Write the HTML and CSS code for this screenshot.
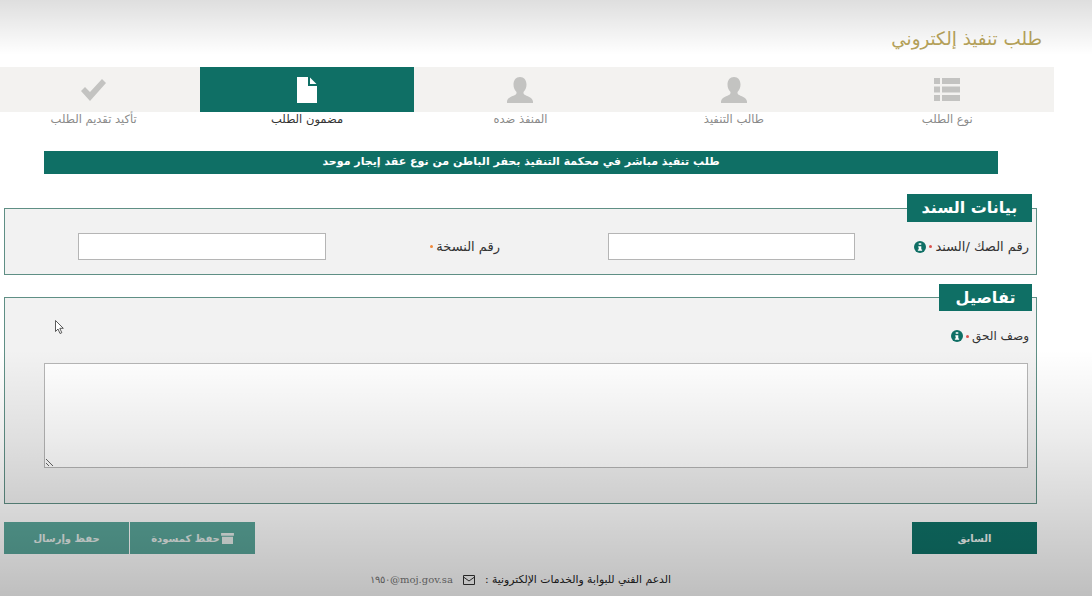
FILE: index.html
```html
<!DOCTYPE html>
<html lang="ar" dir="rtl">
<head>
    <meta charset="UTF-8">
    <meta name="viewport" content="width=device-width, initial-scale=1.0">
    <title>طلب تنفيذ إلكتروني</title>
    <link rel="stylesheet" href="styles.css">
</head>
<body>
    <header class="page-header">
        <h1 class="page-title">طلب تنفيذ إلكتروني</h1>
    </header>

    <div class="steps">
        <div class="step">
            <div class="step-head">
                <svg class="step-icon list-icon" viewBox="0 0 26 24"><path d="M0 0h6v6H0zM8 0h18v6H8zM0 8.500h6v6H0zM8 8.500h18v6H8zM0 17h6v6H0zM8 17h18v6H8z"/></svg>
            </div>
            <div class="step-label">نوع الطلب</div>
        </div>
        <div class="step">
            <div class="step-head">
                <svg class="step-icon user-icon" viewBox="0 0 26 26"><path d="M13 0c-4 0-6.500 3-6.500 7.500 0 3 1 5.500 2.800 7.300 0.400 0.500 0.300 2-0.500 2.600C6.500 19 0.500 20 0 24.500V26h26v-1.500c-0.500-4.500-6.500-5.500-8.800-7.100-0.800-0.600-0.900-2.100-0.500-2.600 1.800-1.800 2.800-4.300 2.800-7.300C19.500 3 17 0 13 0z"/></svg>
            </div>
            <div class="step-label">طالب التنفيذ</div>
        </div>
        <div class="step">
            <div class="step-head">
                <svg class="step-icon user-icon" viewBox="0 0 26 26"><path d="M13 0c-4 0-6.500 3-6.500 7.500 0 3 1 5.500 2.800 7.300 0.400 0.500 0.300 2-0.500 2.600C6.500 19 0.500 20 0 24.500V26h26v-1.500c-0.500-4.500-6.500-5.500-8.800-7.100-0.800-0.600-0.900-2.100-0.500-2.600 1.800-1.800 2.800-4.300 2.800-7.300C19.500 3 17 0 13 0z"/></svg>
            </div>
            <div class="step-label">المنفذ ضده</div>
        </div>
        <div class="step active">
            <div class="step-head">
                <svg class="step-icon file-icon" viewBox="0 0 20 26"><path d="M0 0h11v9h9v17H0zM13 0.500l6.500 6.500H13z"/></svg>
            </div>
            <div class="step-label">مضمون الطلب</div>
        </div>
        <div class="step">
            <div class="step-head">
                <svg class="step-icon check-icon" viewBox="0 0 25 22"><path d="M0 12l4-4 5 5L21 0l4 4L9 22z"/></svg>
            </div>
            <div class="step-label">تأكيد تقديم الطلب</div>
        </div>
    </div>

    <div class="banner">طلب تنفيذ مباشر في محكمة التنفيذ بحفر الباطن من نوع عقد إيجار موحد</div>

    <main class="content">
        <section class="panel">
            <h2 class="legend legend-doc">بيانات السند</h2>
            <div class="field-row">
                <label class="field-label">
                    رقم الصك /السند
                    <span class="req"></span>
                    <svg class="info-icon" viewBox="0 0 14 14"><circle cx="7" cy="7" r="7"/><path class="info-i" d="M5.500 2.500h3v2h-3zM5 6h3.500v4h1v1.500h-5V10h1V7.500H5z"/></svg>
                </label>
                <input class="text-input" type="text">
                <label class="field-label second">
                    رقم النسخة
                    <span class="req orange"></span>
                </label>
                <input class="text-input" type="text">
            </div>
        </section>

        <section class="panel details">
            <h2 class="legend legend-details">تفاصيل</h2>
            <label class="field-label details-label">
                وصف الحق
                <span class="req"></span>
                <svg class="info-icon" viewBox="0 0 14 14"><circle cx="7" cy="7" r="7"/><path class="info-i" d="M5.500 2.500h3v2h-3zM5 6h3.500v4h1v1.500h-5V10h1V7.500H5z"/></svg>
            </label>
            <textarea class="text-area"></textarea>
        </section>

        <div class="actions">
            <button class="btn">السابق</button>
            <div class="btn-group">
                <button class="btn light">
                    <svg class="archive-icon" viewBox="0 0 14 12"><path d="M0 0h14v3H0zM1 4h12v8H1z"/></svg>حفظ كمسودة
                </button>
                <button class="btn light">حفظ وإرسال</button>
            </div>
        </div>

        <footer class="support">
            <span class="support-text">الدعم الفني للبوابة والخدمات الإلكترونية :</span>
            <svg class="mail-icon" viewBox="0 0 12 10"><path d="M0.500 0.500h11v9h-11zM0.500 2l5.500 4 5.500-4"/></svg>
            <span class="support-mail" dir="ltr">١٩٥٠@moj.gov.sa</span>
        </footer>
    </main>

    <svg class="cursor" viewBox="0 0 10 14"><path d="M0.500 0.500v11l2.500-2.500 2 4.500 1.800-0.800-2-4.400h3.500z"/></svg>
</body>
</html>
```

FILE: styles.css
```css
html, body {
    margin: 0;
    height: 596px;
    overflow: hidden;
}
body {
    position: relative;
    background: #fff;
    font-family: "DejaVu Sans", sans-serif;
    color: #333;
}
/* video style shading over the whole page */
body::after {
    content: "";
    position: absolute;
    top: 0;
    left: 0;
    right: 0;
    bottom: 0;
    pointer-events: none;
    background: linear-gradient(to bottom,
        rgba(0, 0, 0, 0.13) 0,
        rgba(0, 0, 0, 0) 55px,
        rgba(0, 0, 0, 0) 350px,
        rgba(0, 0, 0, 0.08) 440px,
        rgba(0, 0, 0, 0.25) 100%);
}
.page-header {
    height: 67px;
    padding: 27px 50px 0 0;
    box-sizing: border-box;
}
.page-title {
    margin: 0;
    font-size: 18.300px;
    line-height: 24px;
    font-weight: normal;
    color: #b8a45a;
}
.steps {
    display: flex;
    width: 1067px;
    margin-right: 38px;
}
.step {
    flex: 1;
    text-align: center;
}
.step-head {
    display: flex;
    align-items: center;
    justify-content: center;
    height: 45px;
    background: #f3f2f0;
}
.step.active .step-head {
    background: #0f6f65;
}
.step-icon {
    display: block;
    fill: #c3c3c1;
}
.step.active .step-icon {
    fill: #fff;
}
.list-icon {
    width: 26px;
    height: 24px;
}
.user-icon {
    width: 26px;
    height: 26px;
}
.file-icon {
    width: 20px;
    height: 26px;
}
.check-icon {
    width: 25px;
    height: 22px;
}
.step-label {
    font-size: 11.500px;
    line-height: 14px;
    color: #8a8a8a;
}
.step.active .step-label {
    color: #333;
}
.banner {
    height: 23px;
    margin: 25px 94px 0 44px;
    background: #0f6f65;
    color: #fff;
    font-size: 11px;
    font-weight: bold;
    line-height: 22px;
    text-align: center;
}
.content {
    margin: 34px 55px 0 4px;
}
.panel {
    display: flex;
    flex-direction: column;
    border: 1px solid #5f8f85;
    background: #f2f2f2;
    padding: 0 7px 14px 0;
}
.legend {
    align-self: flex-start;
    box-sizing: border-box;
    margin: -15px -3px 0 0;
    background: #0f6f65;
    color: #fff;
    font-size: 16px;
    font-weight: bold;
    text-align: center;
}
.legend-doc {
    width: 125px;
    height: 28px;
    line-height: 28px;
}
.legend-details {
    width: 93px;
    height: 27px;
    margin-top: -14px;
    line-height: 27px;
}
.field-row {
    display: grid;
    grid-template-columns: 174px 247px 282px 248px;
    align-items: center;
    margin-top: 11px;
}
.field-label {
    display: flex;
    align-items: center;
    gap: 3px;
    font-size: 13px;
    line-height: 14px;
    color: #333;
}
.field-label.second {
    padding-right: 108px;
}
.req {
    width: 3px;
    height: 3px;
    border-radius: 50%;
    background: #d9534f;
}
.req.orange {
    background: #f0883a;
}
.info-icon {
    width: 12px;
    height: 12px;
    fill: #0f6f65;
}
.info-i {
    fill: #fff;
}
.text-input {
    box-sizing: border-box;
    width: 100%;
    height: 27px;
    margin: 0;
    border: 1px solid #b5b5b5;
    background: #fff;
}
.details {
    margin-top: 22px;
    padding-bottom: 35px;
}
.details-label {
    margin-top: 18px;
    font-size: 12px;
}
.text-area {
    display: block;
    box-sizing: border-box;
    width: 984px;
    height: 105px;
    margin: 20px 1px 0 0;
    border: 1px solid #b5b5b5;
    background: #fff;
}
.actions {
    display: flex;
    justify-content: space-between;
    margin-top: 18px;
}
.btn-group {
    display: flex;
    gap: 1px;
}
.btn {
    display: flex;
    align-items: center;
    justify-content: center;
    gap: 1px;
    width: 125px;
    height: 32px;
    padding: 0;
    border: 0;
    background: #0f7268;
    color: #eef4f2;
    font-family: "DejaVu Sans", sans-serif;
    font-size: 10px;
    font-weight: bold;
}
.btn.light {
    background: #5aa69a;
    color: #e4ecea;
}
.archive-icon {
    width: 13px;
    height: 11px;
    fill: #e4ecea;
}
.support {
    display: flex;
    align-items: center;
    justify-content: center;
    gap: 10px;
    margin-top: 19px;
    font-size: 10.800px;
    line-height: 14px;
}
.support-text {
    color: #222;
}
.mail-icon {
    width: 12px;
    height: 10px;
    fill: none;
    stroke: #333;
    stroke-width: 1;
}
.support-mail {
    font-family: "DejaVu Serif", serif;
    font-size: 10px;
    color: #777;
}
.cursor {
    position: absolute;
    top: 320px;
    left: 55px;
    width: 10px;
    height: 14px;
    fill: #fff;
    stroke: #333;
    stroke-width: 0.8;
}
```
